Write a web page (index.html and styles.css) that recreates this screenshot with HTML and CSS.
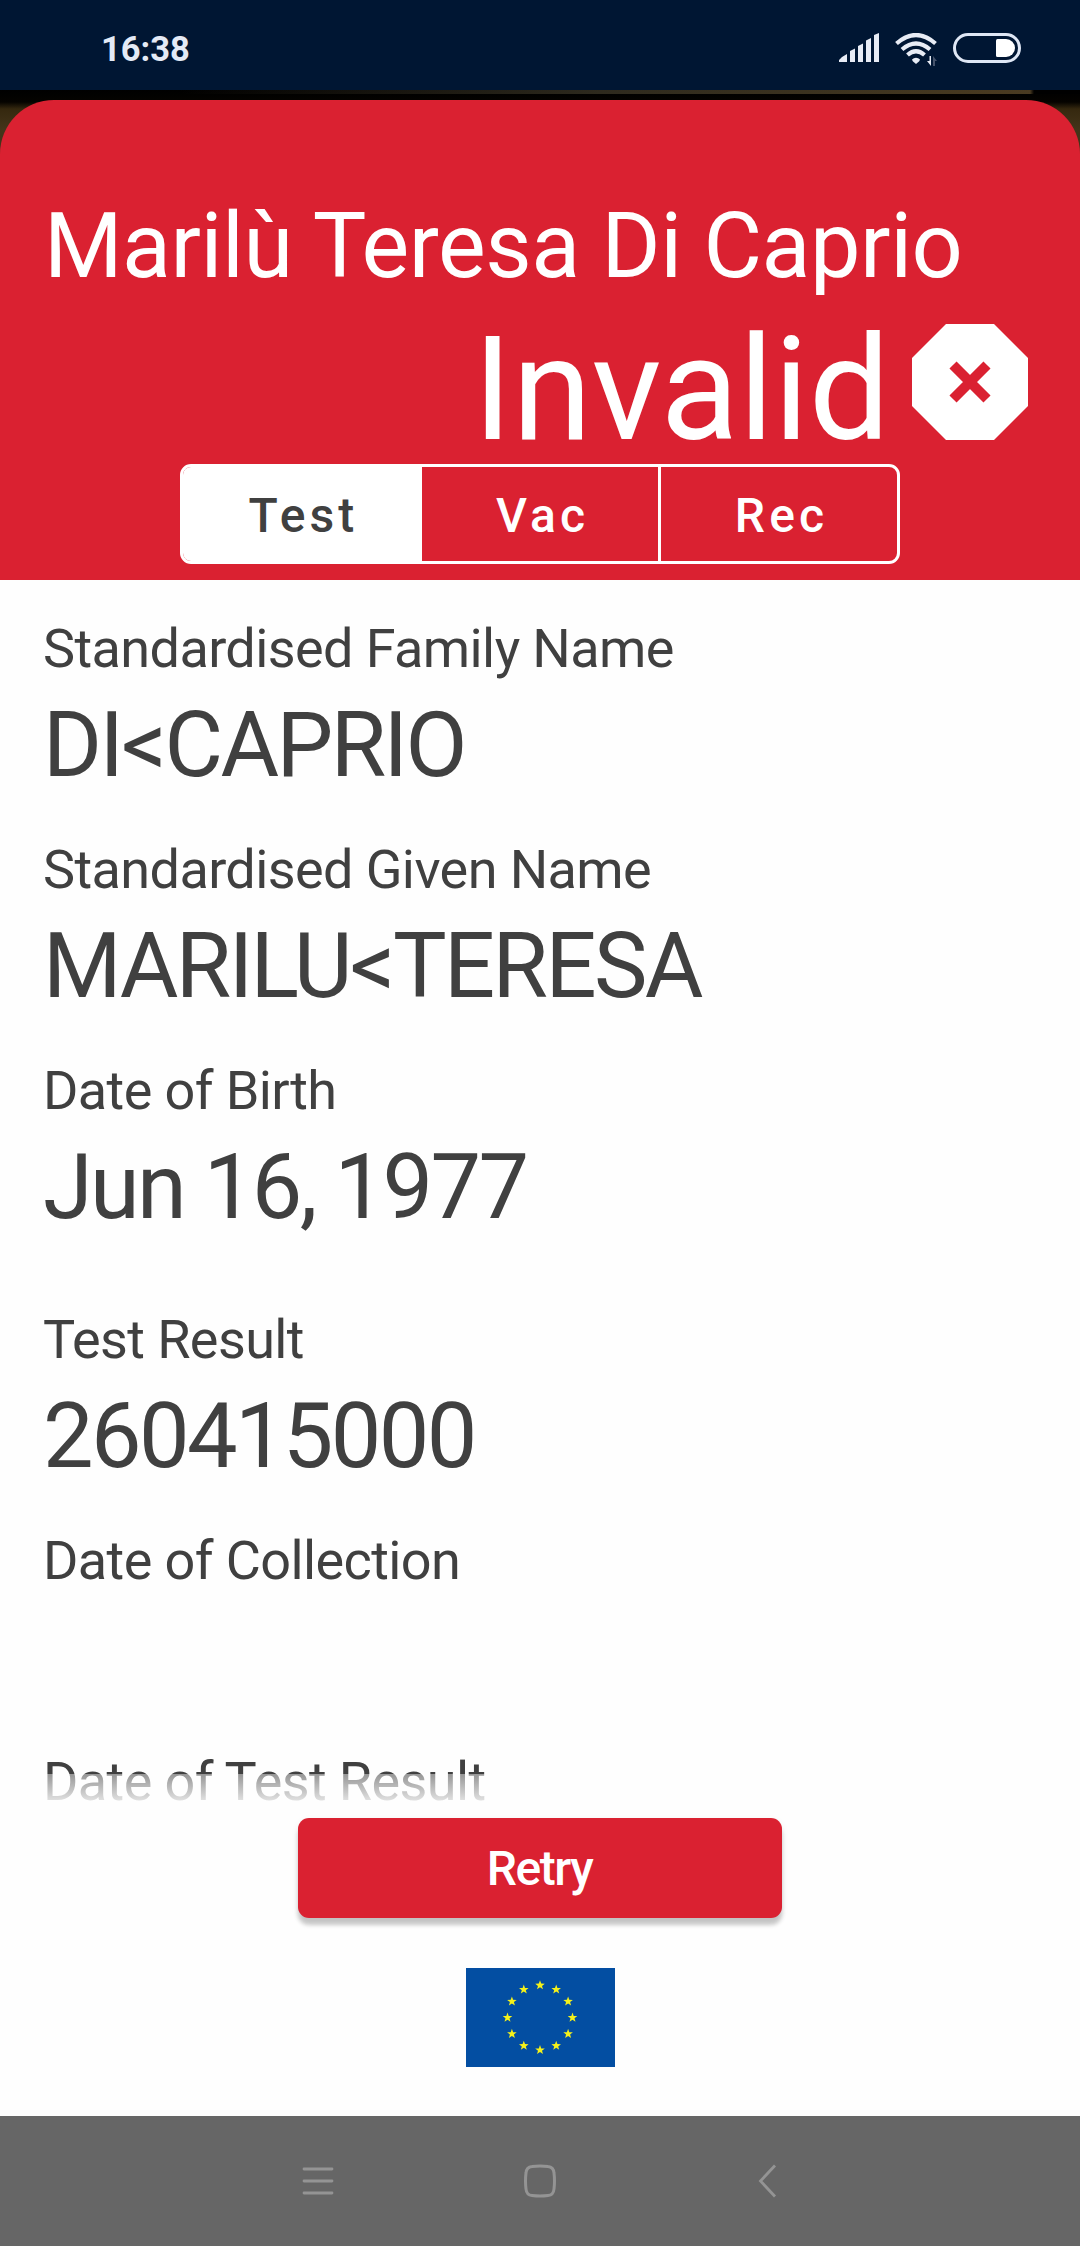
FILE: index.html
```html
<!DOCTYPE html>
<html lang="en">
<head>
<meta charset="utf-8">
<title>Certificate check</title>
<link rel="stylesheet" href="styles.css">
</head>
<body>
<div class="screen">
  <div class="status-bar">
    <span class="clock">16:38</span>
    <div class="status-icons">
      <svg class="signal" viewBox="0 0 40 29" width="40" height="29"><path fill="#e8ecf5" d="M0 29v-2l3-3 5-3v8zM11 29V18l5-2.500V29zM19 29V13l5-2.500V29zM27 29V7.500l5-2.500V29zM35 29V2l5-2v29z"/></svg>
      <svg class="wifi" viewBox="0 0 43 33" width="43" height="33">
        <g fill="none" stroke="#e8ecf5" stroke-width="4.200"><path d="M1.500 10.500Q21 -6.500 40.500 10.500"/><path d="M7 16.500Q21 4.500 35 16.500"/><path d="M12.500 22Q21 14.500 29.500 22"/></g>
        <path fill="#e8ecf5" d="M17 26.500a5.500 5.500 0 0 1 8 0q0 1.500-4 4.500q-4-3-4-4.500z"/>
        <path fill="#e8ecf5" d="M34.500 23h1.500v10l-4-5h2.500z"/><path fill="#46536b" d="M38 33v-10l4 5h-2v5z"/>
      </svg>
      <svg class="battery" viewBox="0 0 68 30" width="68" height="30"><rect x="1.500" y="1.500" width="65" height="27" rx="13.500" fill="none" stroke="#dfe7f5" stroke-width="3"/><path fill="#fff" d="M44.500 6H53a9 9 0 0 1 0 18h-8.500a1.500 1.500 0 0 1-1.500-1.500v-15a1.500 1.500 0 0 1 1.500-1.500z"/></svg>
    </div>
  </div>
  <div class="camera">
    <header class="header">
      <h1 class="name">Marilù Teresa Di Caprio</h1>
      <div class="verdict">
        <span class="verdict-text">Invalid</span>
        <svg viewBox="0 0 116 116" width="116" height="116"><path fill="#fff" d="M34 0h48l34 34v48l-34 34H34L0 82V34z"/><path stroke="#da2131" stroke-width="10" stroke-linecap="butt" d="M41 41l34 34M75 41l-34 34"/></svg>
      </div>
      <div class="tabs">
        <div class="tab tab-active">Test</div>
        <div class="tab">Vac</div>
        <div class="tab">Rec</div>
      </div>
    </header>
  </div>
  <main class="details">
    <div class="field"><div class="label">Standardised Family Name</div><div class="value">DI&lt;CAPRIO</div></div>
    <div class="field"><div class="label">Standardised Given Name</div><div class="value">MARILU&lt;TERESA</div></div>
    <div class="field field-last"><div class="label">Date of Birth</div><div class="value">Jun 16, 1977</div></div>
    <div class="field"><div class="label">Test Result</div><div class="value">260415000</div></div>
    <div class="field"><div class="label">Date of Collection</div><div class="value"></div></div>
    <div class="field"><div class="label">Date of Test Result</div></div>
  </main>
  <div class="actions">
    <button class="retry">Retry</button>
    <svg class="flag" viewBox="0 0 149 99" width="149" height="99">
      <defs><path id="star" fill="#f5f11a" d="M0-5 1.200-1.600 4.800-1.500 2 .7 3 4.100 0 2.100-3 4.100-2 .7-4.800-1.500-1.200-1.600z"/></defs>
      <rect width="149" height="99" fill="#034ea2"/>
      <use href="#star" x="74" y="17.200"/><use href="#star" x="90.200" y="21.500"/><use href="#star" x="102.100" y="33.400"/><use href="#star" x="106.500" y="49.600"/>
      <use href="#star" x="102.100" y="65.800"/><use href="#star" x="90.200" y="77.700"/><use href="#star" x="74" y="82"/><use href="#star" x="57.800" y="77.700"/>
      <use href="#star" x="45.900" y="65.800"/><use href="#star" x="41.500" y="49.600"/><use href="#star" x="45.900" y="33.400"/><use href="#star" x="57.800" y="21.500"/>
    </svg>
  </div>
  <nav class="nav-bar">
    <svg viewBox="0 0 34 34" width="34" height="34"><path stroke="#949494" stroke-width="2.800" stroke-linecap="round" d="M4 5h28M4 17h28M4 29h28"/></svg>
    <svg viewBox="0 0 34 34" width="34" height="34"><path fill="none" stroke="#949494" stroke-width="3" d="M9 2.500Q17 1.500 25 2.500Q30.500 3 31 9Q32 17 31 25Q30.500 31 25 31.500Q17 32.500 9 31.500Q3.500 31 3 25Q2 17 3 9Q3.500 3 9 2.500z"/></svg>
    <svg viewBox="0 0 34 34" width="34" height="34"><path fill="none" stroke="#949494" stroke-width="2.800" d="M29 1.500L14.500 17l14.500 15.500"/></svg>
  </nav>
</div>
</body>
</html>
```
FILE: styles.css
```css
* { box-sizing: border-box; }
body { margin: 0; font-family: Roboto, sans-serif; color: #404040; background: #fefefe; }
.screen { width: 1080px; height: 2246px; display: flex; flex-direction: column; overflow: hidden; }

.status-bar { height: 90px; flex: none; background: #001633; display: flex; justify-content: space-between; padding: 0 59px 0 101px; }
.clock { font-weight: 700; font-size: 34.500px; line-height: 98px; color: #e4eaf6; }
.status-icons { display: flex; align-items: flex-start; padding-top: 33px; }
.wifi { margin-left: 16px; }
.battery { margin-left: 15px; }

/* strip of the camera preview that stays visible behind the sheet */
.camera {
  flex: none;
  padding-top: 10px;
  background:
    linear-gradient(90deg, transparent 180px, #2e2a1e 600px, #453820 960px, #4a3b22 1030px, #000 1034px) 0 0 / 100% 4px no-repeat,
    linear-gradient(#000 0, #050300 12px, #35280f 19px, #43351a 40px);
}

.header { height: 480px; background: #da2131; border-radius: 54px 54px 0 0; display: flex; flex-direction: column; padding: 92px 52px 0 44px; }
.name { margin: 0; font-weight: 400; font-size: 90px; line-height: 110px; letter-spacing: -.47px; color: #fff; white-space: nowrap; }
.verdict { display: flex; justify-content: flex-end; gap: 23px; height: 116px; margin-top: 22px; color: #fff; font-size: 144px; line-height: 131px; }
.verdict svg { display: block; }
.verdict-text { margin-right: -1px; }
.tabs { display: flex; align-self: flex-start; width: 720px; height: 100px; margin: 24px 0 0 136px; border: 3px solid #fff; border-radius: 11px; overflow: hidden; }
.tab { flex: 1; display: flex; justify-content: center; font-weight: 500; font-size: 48px; line-height: 97px; letter-spacing: 4.100px; color: #fff; padding-left: 5px; }
.tab + .tab { border-left: 3px solid #fff; }
.tab-active { background: #fff; color: #404040; }

.details { position: relative; flex: none; height: 1221px; overflow: hidden; padding: 33px 43px 0; display: flex; flex-direction: column; gap: 33px; }
.details::after { content: ""; position: absolute; left: 0; right: 0; bottom: 0; height: 27px; background: linear-gradient(rgba(254,254,254,.45), rgba(254,254,254,.85)); }
.field { display: flex; flex-direction: column; gap: 6px; }
.field-last { margin-bottom: 28px; }
.label { font-size: 54px; line-height: 72px; letter-spacing: -.6px; }
.value { font-size: 90px; line-height: 110px; height: 110px; letter-spacing: -.029em; }

.actions { flex: 1; display: flex; flex-direction: column; align-items: center; padding-top: 17px; }
.retry { width: 484px; height: 100px; border: 0; border-radius: 11px; background: #da2131; color: #fff; font: 500 48px/98px Roboto, sans-serif; letter-spacing: -.03em; padding: 2px 1px 0 0; box-shadow: 0 7px 4px rgba(0,0,0,.2), 0 3px 8px rgba(0,0,0,.06); }
.flag { margin-top: 50px; }

.nav-bar { flex: none; height: 130px; background: #666; display: flex; justify-content: center; align-items: center; gap: 189px; }
```
